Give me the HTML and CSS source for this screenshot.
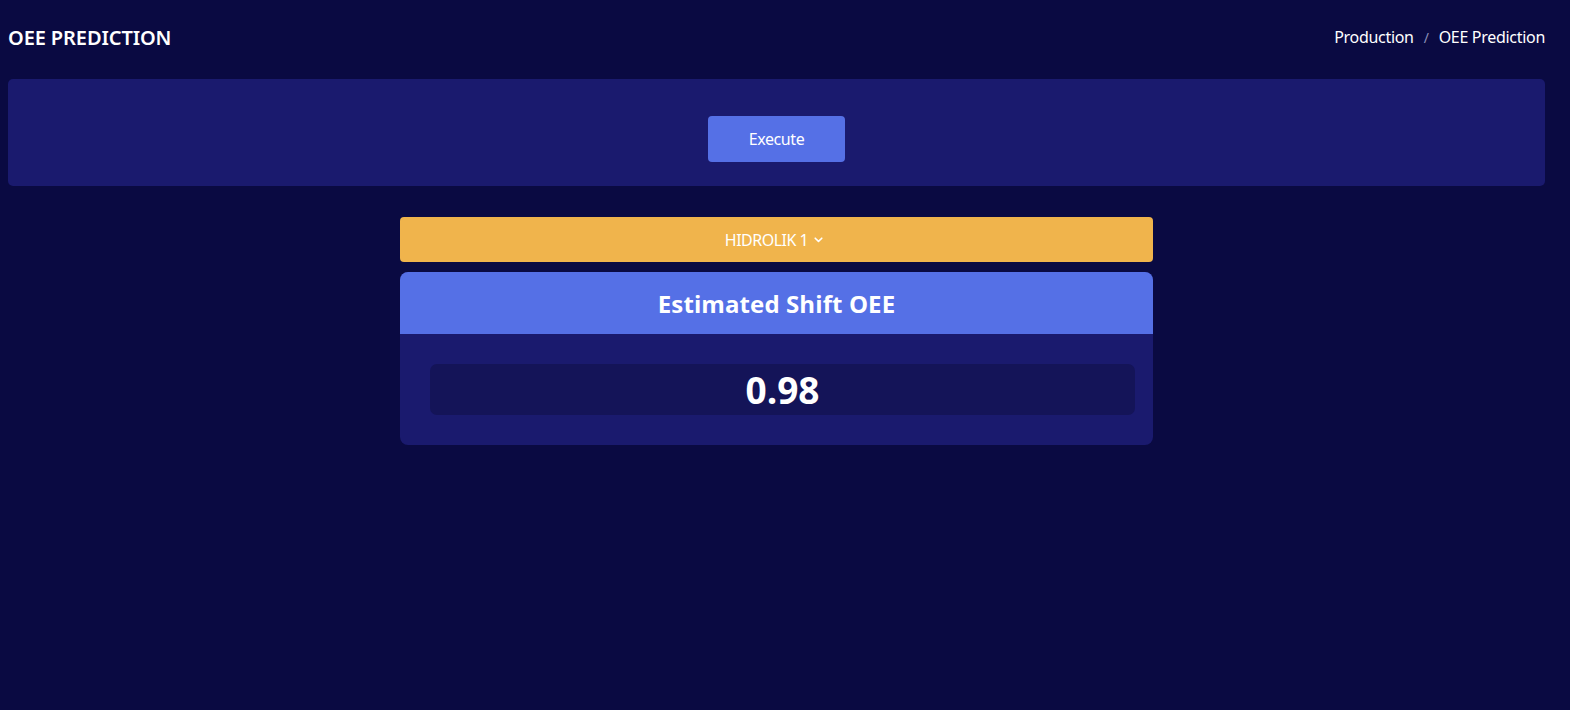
FILE: index.html
```html
<!DOCTYPE html>
<html lang="en">
<head>
<meta charset="utf-8">
<title>OEE Prediction</title>
<link rel="stylesheet" href="styles.css">
</head>
<body>
<div class="page">
  <header class="page-head">
    <h1 class="page-title">OEE PREDICTION</h1>
    <nav class="crumbs">
      <span class="crumb">Production</span>
      <span class="crumb-sep">/</span>
      <span class="crumb">OEE Prediction</span>
    </nav>
  </header>

  <section class="exec-card">
    <button class="btn-exec" type="button">Execute</button>
  </section>

  <section class="result">
    <div class="machine-select">HIDROLIK 1
      <svg class="chev" width="9" height="6" viewBox="0 0 9 6"><path d="M1.2 1.2 L4.5 4.4 L7.8 1.2" fill="none" stroke="#fff" stroke-width="1.6" stroke-linecap="round" stroke-linejoin="round"/></svg>
    </div>
    <div class="oee-card">
      <div class="oee-head">Estimated Shift OEE</div>
      <div class="oee-body">
        <div class="oee-value">0.98</div>
      </div>
    </div>
  </section>
</div>
</body>
</html>
```

FILE: styles.css
```css
html, body {
  margin: 0;
  padding: 0;
  background: #0a0a42;
  color: #fff;
  font-family: "Open Sans", "Noto Sans", sans-serif;
}

.page {
  padding: 0 25px 0 8px;
}

.page-head {
  display: flex;
  justify-content: space-between;
  align-items: center;
  height: 79px;
  padding-bottom: 5px;
  box-sizing: border-box;
}

.page-title {
  margin: 0;
  font-size: 20px;
  font-weight: 600;
  letter-spacing: -0.1px;
  font-family: "Noto Sans", "Open Sans", sans-serif;
}

.crumbs {
  display: flex;
  align-items: center;
  gap: 10px;
  font-size: 16px;
  font-family: "Noto Sans", sans-serif;
  letter-spacing: -0.3px;
}

.crumb-sep {
  color: #8b8fb8;
  font-size: 14px;
}

.exec-card {
  background: #1a1a6e;
  border-radius: 5px;
  padding: 37px 0 24px;
  display: flex;
  justify-content: center;
}

.btn-exec {
  width: 137px;
  height: 46px;
  border: none;
  border-radius: 4px;
  background: #5570e6;
  color: #fff;
  font-family: "Noto Sans", sans-serif;
  font-size: 16px;
  letter-spacing: -0.4px;
  cursor: pointer;
}

.result {
  width: 753px;
  margin: 31px auto 0;
  display: flex;
  flex-direction: column;
  gap: 10px;
}

.machine-select {
  height: 45px;
  background: #f0b44c;
  border-radius: 4px;
  display: flex;
  align-items: center;
  justify-content: center;
  gap: 6px;
  padding-right: 5px;
  font-size: 16px;
  font-family: "Noto Sans", sans-serif;
  letter-spacing: -0.5px;
}

.oee-card {
  background: #1a1a6e;
  border-radius: 8px;
  overflow: hidden;
}

.oee-head {
  background: #5570e6;
  height: 62px;
  display: flex;
  align-items: center;
  justify-content: center;
  font-size: 24px;
  font-weight: 700;
  letter-spacing: 0.1px;
}

.oee-body {
  padding: 30px 18px 30px 30px;
}

.oee-value {
  background: #141458;
  border-radius: 7px;
  height: 51px;
  display: flex;
  align-items: center;
  justify-content: center;
  font-size: 37px;
  font-weight: 700;
}
```
